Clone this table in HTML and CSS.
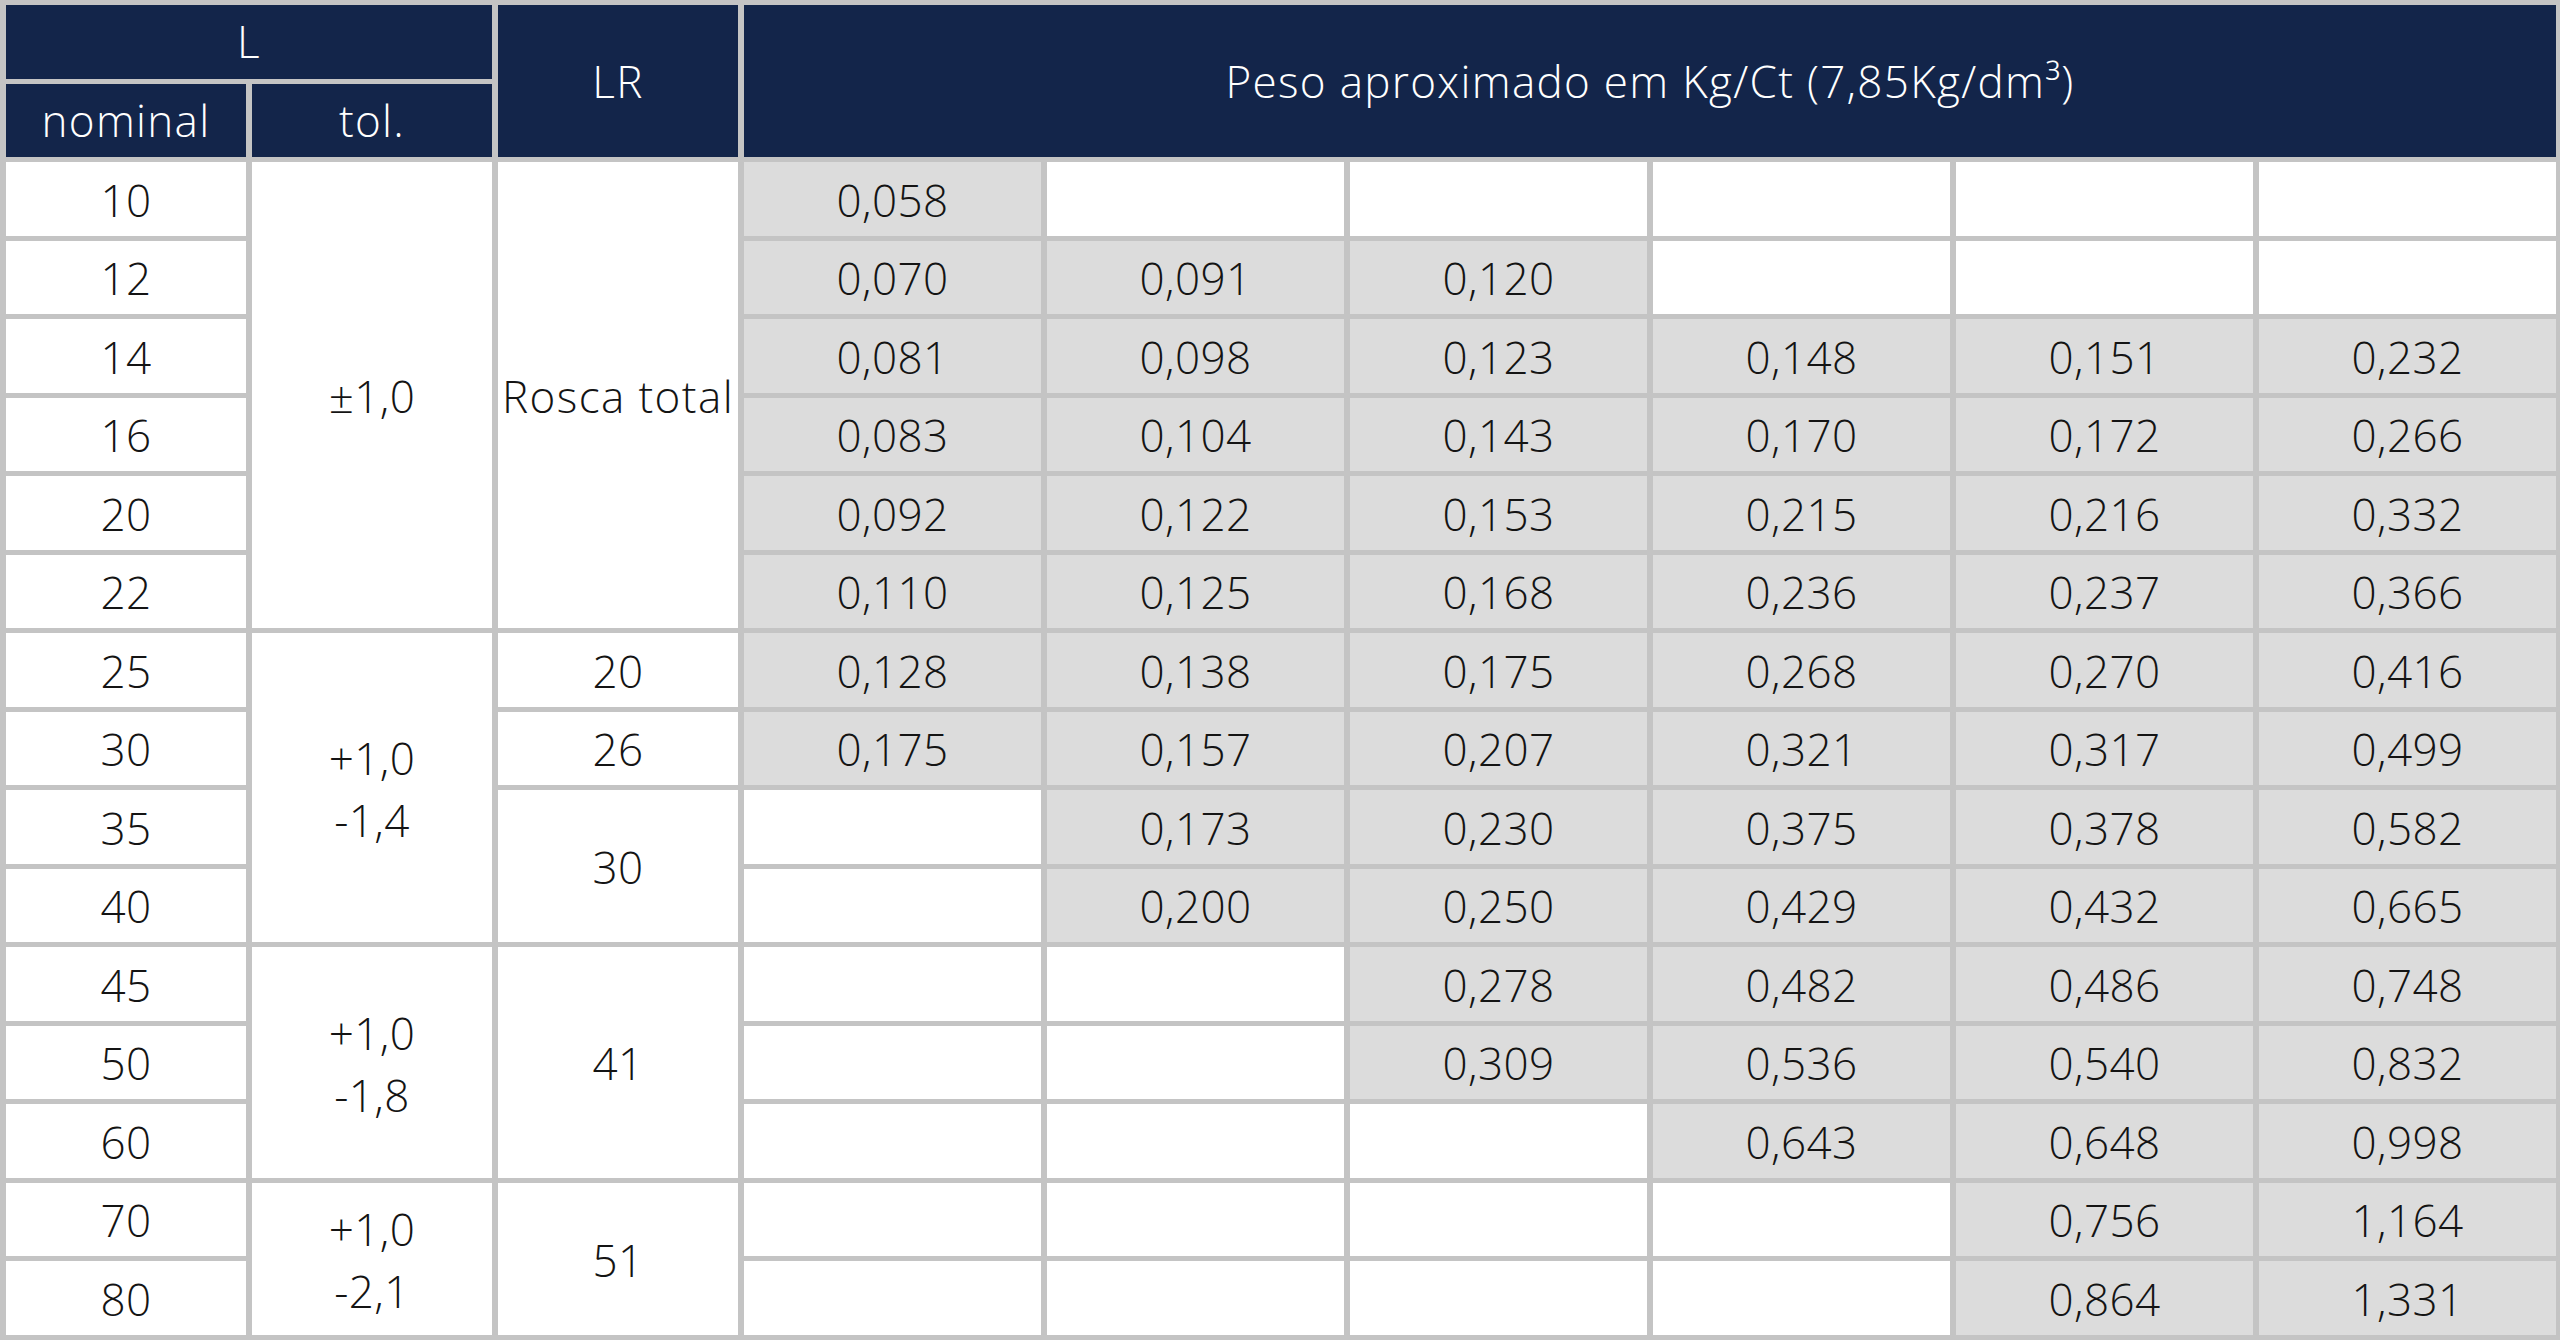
FILE: index.html
```html
<!DOCTYPE html>
<html lang="pt">
<head>
<meta charset="utf-8">
<title>Peso aproximado</title>
<link rel="stylesheet" href="styles.css">
</head>
<body>
<table class="spec">
  <colgroup>
    <col class="c-narrow"><col class="c-narrow"><col class="c-narrow">
    <col class="c-wide"><col class="c-wide"><col class="c-wide"><col class="c-wide"><col class="c-wide"><col class="c-wide">
  </colgroup>
  <thead>
    <tr>
      <th colspan="2">L</th>
      <th rowspan="2">LR</th>
      <th colspan="6" rowspan="2">Peso aproximado em Kg/Ct (7,85Kg/dm³)</th>
    </tr>
    <tr>
      <th>nominal</th>
      <th>tol.</th>
    </tr>
  </thead>
  <tbody>
    <tr>
      <td>10</td>
      <td rowspan="6">±1,0</td>
      <td rowspan="6" class="tight">Rosca total</td>
      <td class="g">0,058</td><td></td><td></td><td></td><td></td><td></td>
    </tr>
    <tr>
      <td>12</td>
      <td class="g">0,070</td><td class="g">0,091</td><td class="g">0,120</td><td></td><td></td><td></td>
    </tr>
    <tr>
      <td>14</td>
      <td class="g">0,081</td><td class="g">0,098</td><td class="g">0,123</td><td class="g">0,148</td><td class="g">0,151</td><td class="g">0,232</td>
    </tr>
    <tr>
      <td>16</td>
      <td class="g">0,083</td><td class="g">0,104</td><td class="g">0,143</td><td class="g">0,170</td><td class="g">0,172</td><td class="g">0,266</td>
    </tr>
    <tr>
      <td>20</td>
      <td class="g">0,092</td><td class="g">0,122</td><td class="g">0,153</td><td class="g">0,215</td><td class="g">0,216</td><td class="g">0,332</td>
    </tr>
    <tr>
      <td>22</td>
      <td class="g">0,110</td><td class="g">0,125</td><td class="g">0,168</td><td class="g">0,236</td><td class="g">0,237</td><td class="g">0,366</td>
    </tr>
    <tr>
      <td>25</td>
      <td rowspan="4" class="two">+1,0<br>-1,4</td>
      <td>20</td>
      <td class="g">0,128</td><td class="g">0,138</td><td class="g">0,175</td><td class="g">0,268</td><td class="g">0,270</td><td class="g">0,416</td>
    </tr>
    <tr>
      <td>30</td>
      <td>26</td>
      <td class="g">0,175</td><td class="g">0,157</td><td class="g">0,207</td><td class="g">0,321</td><td class="g">0,317</td><td class="g">0,499</td>
    </tr>
    <tr>
      <td>35</td>
      <td rowspan="2">30</td>
      <td></td><td class="g">0,173</td><td class="g">0,230</td><td class="g">0,375</td><td class="g">0,378</td><td class="g">0,582</td>
    </tr>
    <tr>
      <td>40</td>
      <td></td><td class="g">0,200</td><td class="g">0,250</td><td class="g">0,429</td><td class="g">0,432</td><td class="g">0,665</td>
    </tr>
    <tr>
      <td>45</td>
      <td rowspan="3" class="two">+1,0<br>-1,8</td>
      <td rowspan="3">41</td>
      <td></td><td></td><td class="g">0,278</td><td class="g">0,482</td><td class="g">0,486</td><td class="g">0,748</td>
    </tr>
    <tr>
      <td>50</td>
      <td></td><td></td><td class="g">0,309</td><td class="g">0,536</td><td class="g">0,540</td><td class="g">0,832</td>
    </tr>
    <tr>
      <td>60</td>
      <td></td><td></td><td></td><td class="g">0,643</td><td class="g">0,648</td><td class="g">0,998</td>
    </tr>
    <tr>
      <td>70</td>
      <td rowspan="2" class="two">+1,0<br>-2,1</td>
      <td rowspan="2">51</td>
      <td></td><td></td><td></td><td></td><td class="g">0,756</td><td class="g">1,164</td>
    </tr>
    <tr>
      <td>80</td>
      <td></td><td></td><td></td><td></td><td class="g">0,864</td><td class="g">1,331</td>
    </tr>
  </tbody>
</table>
</body>
</html>
```

FILE: styles.css
```css
html, body {
  margin: 0;
  padding: 0;
  background: #c4c4c4;
}

.spec {
  table-layout: fixed;
  width: 2560px;
  border-collapse: separate;
  border-spacing: 6px 5px;
  background: #c4c4c4;
  font-family: "Open Sans", "Noto Sans", sans-serif;
  font-weight: 350;
  font-size: 44px;
  color: #141414;
}

.c-narrow { width: 240px; }
.c-wide { width: 297px; }

.spec th,
.spec td {
  padding: 0 2px;
  text-align: center;
  vertical-align: middle;
  line-height: 1.2;
  white-space: nowrap;
}

.spec th {
  height: 73.5px;
  background: #13254a;
  color: #ffffff;
  font-weight: 350;
  letter-spacing: 1.3px;
}

.spec td {
  height: 70.5px;
  background: #ffffff;
  padding-top: 3px;
  padding-bottom: 0;
  letter-spacing: 0.4px;
}

.spec td.g {
  background: #dcdcdc;
}

.spec td.two {
  line-height: 62px;
}

.spec td.tight {
  padding-left: 0;
  padding-right: 0;
  letter-spacing: 1.4px;
}
```
